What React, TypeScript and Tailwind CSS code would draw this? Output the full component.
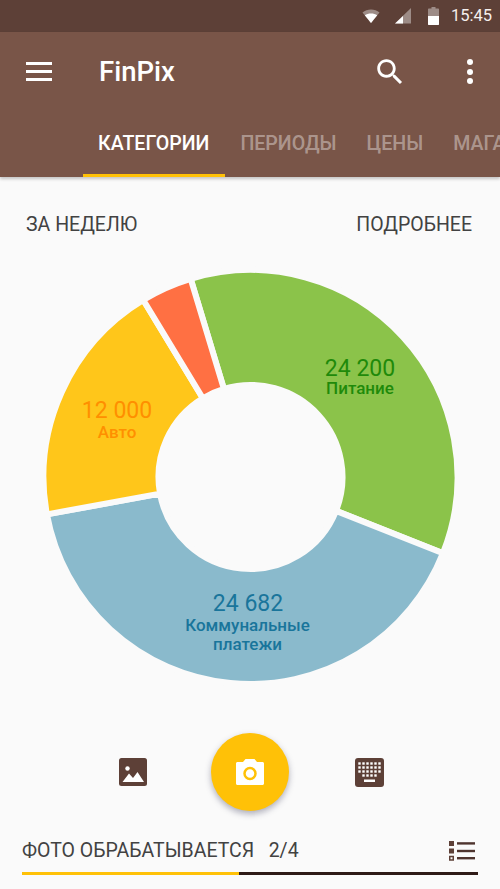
import React from "react";

const CX = 250.5;
const CY = 215;
const R = 207;
const r = 92;

function pt(rad: number, deg: number) {
  const a = (deg * Math.PI) / 180;
  return `${(CX + rad * Math.sin(a)).toFixed(2)} ${(CY - rad * Math.cos(a)).toFixed(2)}`;
}

function wedge(a: number, b: number) {
  const large = b - a > 180 ? 1 : 0;
  return `M${pt(r, a)} L${pt(R, a)} A${R} ${R} 0 ${large} 1 ${pt(R, b)} L${pt(r, b)} A${r} ${r} 0 ${large} 0 ${pt(r, a)} Z`;
}

const slices = [
  { a: -16.8, b: 111.6, fill: "#8bc34a" },
  { a: 111.6, b: 259.6, fill: "#8abacc" },
  { a: 259.6, b: 328.8, fill: "#ffc61a" },
  { a: 328.8, b: 343.2, fill: "#ff7043" },
];

function Chart() {
  return (
    <svg width="500" height="430" viewBox="0 0 500 430" className="block shrink-0" style={{ fontFamily: "Roboto, sans-serif" }}>
      {slices.map((s) => (
        <path key={s.fill} d={wedge(s.a, s.b)} fill={s.fill} stroke="#fafafa" strokeWidth="6" />
      ))}
      <g textAnchor="middle">
        <text x="360" y="114" fontSize="23" fill="#1f8a0a">24 200</text>
        <text x="360" y="132" fontSize="17" fontWeight="500" fill="#1f8a0a">Питание</text>
        <text x="117" y="156" fontSize="23" fill="#ff8f00">12 000</text>
        <text x="117" y="176" fontSize="17" fontWeight="500" fill="#ff8f00">Авто</text>
        <text x="248" y="349" fontSize="23" fill="#19759b">24 682</text>
        <text x="247.500" y="369" fontSize="17" fontWeight="500" fill="#19759b">Коммунальные</text>
        <text x="247.500" y="388" fontSize="17" fontWeight="500" fill="#19759b">платежи</text>
      </g>
    </svg>
  );
}

export default function App() {
  return (
    <div className="w-[500px] h-[889px] bg-[#fafafa] flex flex-col overflow-hidden font-['Roboto',sans-serif]">
      <div className="h-8 bg-[#5d4037] flex items-center justify-end pr-[8px] shrink-0 text-white">
        <svg width="18" height="14" viewBox="0 0 18 14" className="mr-[15px]">
          <path d="M0.5 3.500 C5 -0.500 13 -0.500 17.500 3.500 L9 14 Z" fill="#fff" fillOpacity="0.4" />
          <path d="M2.800 6.300 C6 3.800 12 3.800 15.200 6.300 L9 14 Z" fill="#fff" />
        </svg>
        <svg width="16" height="16" viewBox="0 0 16 16" className="mr-[17px]">
          <path d="M0 15.500 L16 0 V15.500 Z" fill="#fff" fillOpacity="0.4" />
          <path d="M0 15.500 L8 8 V15.500 Z" fill="#fff" />
        </svg>
        <svg width="11" height="18" viewBox="0 0 11 18" className="mr-[12px]">
          <path d="M3.500 0 H7.500 V1.500 H10 C10.600 1.500 11 1.900 11 2.500 V17 C11 17.600 10.600 18 10 18 H1 C0.400 18 0 17.600 0 17 V2.500 C0 1.900 0.400 1.500 1 1.500 H3.500 Z" fill="#fff" fillOpacity="0.4" />
          <path d="M0 9 H11 V17 C11 17.600 10.600 18 10 18 H1 C0.400 18 0 17.600 0 17 Z" fill="#fff" />
        </svg>
        <span className="text-[16.500px] leading-none text-[#f5f0ee]">15:45</span>
      </div>

      <header className="h-[145px] bg-[#795548] shrink-0 flex flex-col shadow-[0_2px_3px_rgba(0,0,0,0.22)] relative z-10">
        <div className="h-[79px] flex items-center relative">
          <div className="ml-[26px] w-[26px] flex flex-col gap-[5px]">
            <div className="h-[3px] bg-white" />
            <div className="h-[3px] bg-white" />
            <div className="h-[3px] bg-white" />
          </div>
          <div className="ml-[47px] text-[27.500px] leading-none font-medium text-white">FinPix</div>
          <svg width="34" height="34" viewBox="0 0 24 24" className="ml-auto mr-[60px]" fill="#fff">
            <path d="M15.500 14h-.79l-.28-.27C15.410 12.590 16 11.110 16 9.500 16 5.910 13.090 3 9.500 3S3 5.910 3 9.500 5.910 16 9.500 16c1.610 0 3.090-.59 4.230-1.570l.27.28v.79l5 4.990L20.490 19l-4.990-5zm-6 0C7.010 14 5 11.990 5 9.500S7.010 5 9.500 5 14 7.010 14 9.500 11.990 14 9.500 14z" />
          </svg>
          <div className="mr-[27px] flex flex-col gap-[3.500px]">
            <div className="w-[6px] h-[6px] rounded-full bg-white" />
            <div className="w-[6px] h-[6px] rounded-full bg-white" />
            <div className="w-[6px] h-[6px] rounded-full bg-white" />
          </div>
        </div>
        <div className="flex-1 flex pl-[83px] text-[19.600px] font-medium whitespace-nowrap overflow-hidden">
          <div className="pl-[15px] pr-[16px] pt-[20px] border-b-[3px] border-[#ffc107] text-white leading-[26px]">КАТЕГОРИИ</div>
          <div className="px-[15px] pt-[20px] text-white/40 leading-[26px]">ПЕРИОДЫ</div>
          <div className="px-[15px] pt-[20px] text-white/40 leading-[26px]">ЦЕНЫ</div>
          <div className="px-[15px] pt-[20px] text-white/40 leading-[26px]">МАГАЗИНЫ</div>
        </div>
      </header>

      <div className="h-[85px] shrink-0 pt-[36px] pl-[26px] pr-[28px] flex justify-between text-[19.500px] leading-6 text-[#424242]">
        <span>ЗА НЕДЕЛЮ</span>
        <span>ПОДРОБНЕЕ</span>
      </div>

      <Chart />

      <div className="mt-[41px] h-[78px] shrink-0 flex items-center pl-[119px]">
        <svg width="28" height="28" viewBox="0 0 28 28">
          <rect width="28" height="28" rx="2.500" fill="#5d4037" />
          <circle cx="8.500" cy="10.500" r="2.200" fill="#fff" />
          <path d="M3.500 24 L10 15.500 L14 20 L18.500 14 L25 24 Z" fill="#fff" />
        </svg>
        <div className="ml-[64px] mr-[66px] w-[78px] h-[78px] rounded-full bg-[#ffc107] shadow-[0_3px_6px_rgba(60,60,90,0.4)] flex items-center justify-center">
          <svg width="28" height="26" viewBox="0 0 28 26">
            <path d="M9.500 0 H18.500 L21 3 H26.500 C27.300 3 28 3.700 28 4.500 V24.500 C28 25.300 27.300 26 26.500 26 H1.500 C0.700 26 0 25.300 0 24.500 V4.500 C0 3.700 0.700 3 1.500 3 H7 Z" fill="#fff" />
            <circle cx="14" cy="14.500" r="5.500" fill="none" stroke="#ffc107" strokeWidth="2.500" />
          </svg>
        </div>
        <svg width="29" height="29" viewBox="0 0 29 29">
          <rect width="29" height="29" rx="3" fill="#5d4037" />
          {[5.500, 9.500, 13.500, 17.500].map((y) =>
            [4.500, 8.500, 12.500, 16.500, 20.500, 24.500].map((x) =>
              y === 17.500 && (x === 4.500 || x === 24.500) ? null : (
                <rect key={`${x}-${y}`} x={x - 1.200} y={y - 1.200} width="2.400" height="2.400" fill="#fff" />
              )
            )
          )}
          <rect x="9" y="21.500" width="11" height="2.500" fill="#fff" />
        </svg>
      </div>

      <div className="mt-[26px] px-[22px] flex items-center justify-between h-[28px] shrink-0">
        <div className="text-[19.500px] leading-6 text-[#424242] whitespace-pre">ФОТО ОБРАБАТЫВАЕТСЯ   2/4</div>
        <svg width="26" height="20" viewBox="0 0 26 20" className="mr-[3px]">
          <rect x="0" y="0" width="5" height="5" fill="#5d4037" />
          <rect x="0" y="7.500" width="5" height="5" fill="#5d4037" />
          <rect x="0.750" y="15.500" width="3.500" height="3.500" fill="none" stroke="#5d4037" strokeWidth="1.500" />
          <rect x="8" y="1.200" width="18" height="2.400" fill="#4e342e" />
          <rect x="8" y="8.800" width="18" height="2.400" fill="#4e342e" />
          <rect x="8" y="16" width="18" height="2.400" fill="#4e342e" />
        </svg>
      </div>
      <div className="mt-[7px] mx-[22px] h-[3px] flex shrink-0">
        <div className="w-[217px] bg-[#ffc107]" />
        <div className="flex-1 bg-[#2e1a16]" />
      </div>
    </div>
  );
}
